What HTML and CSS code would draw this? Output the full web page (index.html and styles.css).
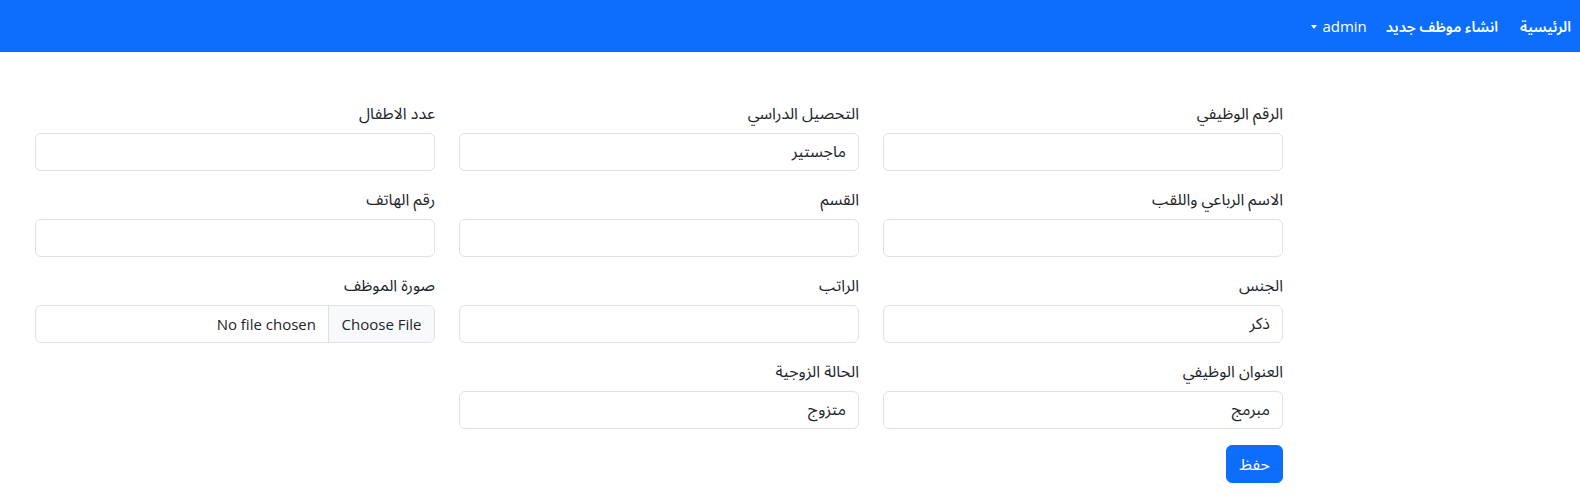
FILE: index.html
```html
<!DOCTYPE html>
<html lang="ar" dir="rtl">
<head>
<meta charset="utf-8">
<title>انشاء موظف جديد</title>
<link rel="stylesheet" href="styles.css">
</head>
<body>
<nav class="navbar">
  <ul class="nav">
    <li><a class="nav-link bold" href="#">الرئيسية</a></li>
    <li><a class="nav-link bold" href="#">انشاء موظف جديد</a></li>
    <li><a class="nav-link dropdown" href="#">admin</a></li>
  </ul>
</nav>
<main class="page">
  <form class="form">
    <div class="col">
      <div class="group"><label>الرقم الوظيفي</label><input class="control" type="text"></div>
      <div class="group"><label>الاسم الرباعي واللقب</label><input class="control" type="text"></div>
      <div class="group"><label>الجنس</label><input class="control" type="text" value="ذكر"></div>
      <div class="group"><label>العنوان الوظيفي</label><input class="control" type="text" value="مبرمج"></div>
      <div><button class="btn" type="button">حفظ</button></div>
    </div>
    <div class="col">
      <div class="group"><label>التحصيل الدراسي</label><input class="control" type="text" value="ماجستير"></div>
      <div class="group"><label>القسم</label><input class="control" type="text"></div>
      <div class="group"><label>الراتب</label><input class="control" type="text"></div>
      <div class="group"><label>الحالة الزوجية</label><input class="control" type="text" value="متزوج"></div>
    </div>
    <div class="col">
      <div class="group"><label>عدد الاطفال</label><input class="control" type="text"></div>
      <div class="group"><label>رقم الهاتف</label><input class="control" type="text"></div>
      <div class="group"><label>صورة الموظف</label>
        <div class="file control">
          <span class="file-btn">Choose File</span><span class="file-name">No file chosen</span>
        </div>
      </div>
    </div>
  </form>
</main>
</body>
</html>
```

FILE: styles.css
```css
* { box-sizing: border-box; }
html, body { margin: 0; }
body {
  font-family: "Open Sans", "Noto Sans Arabic", "DejaVu Sans", sans-serif;
  font-size: 16px;
  line-height: 24px;
  color: #212529;
  background: #fff;
}
.navbar {
  height: 52px;
  background: #0d6efd;
  display: flex;
  align-items: center;
  padding-right: 9px;
}
.nav {
  list-style: none;
  margin: 0;
  padding: 0;
  display: flex;
  gap: 22px;
}
.nav li:last-child { margin-right: -3px; }
.nav-link {
  color: #fff;
  text-decoration: none;
  font-size: 15px;
}
.nav-link.bold { font-weight: 600; font-size: 14.5px; }
.dropdown::after {
  content: "";
  display: inline-block;
  vertical-align: 3px;
  margin-right: 5px;
  border-top: 4px solid #fff;
  border-left: 3.5px solid transparent;
  border-right: 3.5px solid transparent;
}
.page {
  padding: 49px 297px 0 35px;
}
.form {
  display: flex;
  gap: 24px;
}
.col {
  width: 400px;
  display: flex;
  flex-direction: column;
}
.group {
  margin-bottom: 16px;
}
label {
  display: block;
  margin-bottom: 8px;
  font-size: 16px;
  color: #212529;
}
.control {
  display: block;
  width: 100%;
  height: 38px;
  padding: 6px 12px;
  font: inherit;
  font-size: 16px;
  color: #212529;
  background: #fff;
  border: 1px solid #dee2e6;
  border-radius: 6px;
  direction: rtl;
}
.file {
  display: flex;
  padding: 0;
  overflow: hidden;
  align-items: stretch;
}
.file-btn {
  width: 106px;
  display: flex;
  align-items: center;
  justify-content: center;
  background: #f8f9fa;
  border-left: 1px solid #dee2e6;
  font-size: 15px;
}
.file-name {
  display: flex;
  align-items: center;
  padding-right: 12px;
  font-size: 15px;
}
.btn {
  height: 38px;
  min-width: 57px;
  padding: 6px 12px;
  font: inherit;
  font-size: 16px;
  color: #fff;
  background: #0d6efd;
  border: 1px solid #0d6efd;
  border-radius: 6px;
}
```
